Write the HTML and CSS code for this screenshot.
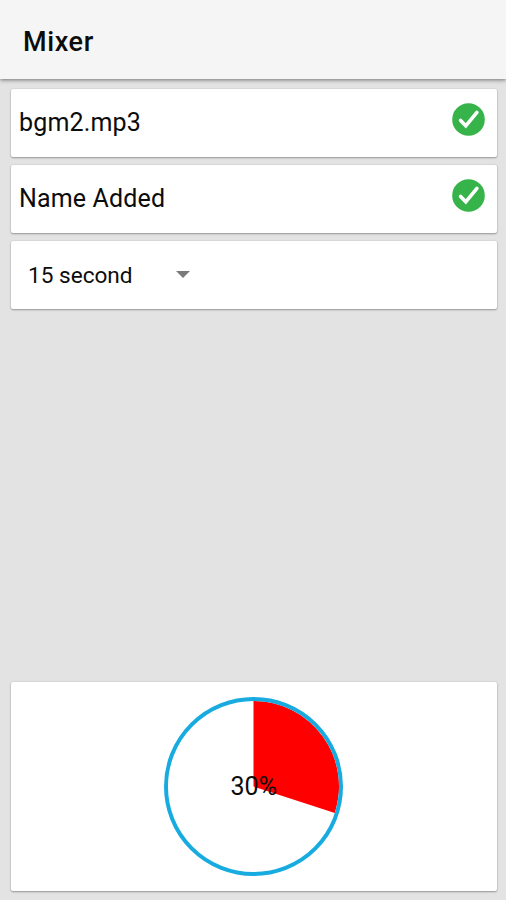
FILE: index.html
```html
<!DOCTYPE html>
<html lang="en">
<head>
<meta charset="utf-8">
<title>Mixer</title>
<link rel="stylesheet" href="styles.css">
</head>
<body>
<header class="app-bar"><h1 class="title">Mixer</h1></header>
<main class="content">
  <section class="card row">
    <span class="label">bgm2.mp3</span>
    <svg class="check" viewBox="0 0 33 33"><circle cx="16.5" cy="16.5" r="16.3" fill="#36b44a"/><path d="M8.6 17.4l5.2 5.4L24.9 9.4" fill="none" stroke="#fff" stroke-width="3.6" stroke-linecap="round"/></svg>
  </section>
  <section class="card row">
    <span class="label">Name Added</span>
    <svg class="check" viewBox="0 0 33 33"><circle cx="16.5" cy="16.5" r="16.3" fill="#36b44a"/><path d="M8.6 17.4l5.2 5.4L24.9 9.4" fill="none" stroke="#fff" stroke-width="3.6" stroke-linecap="round"/></svg>
  </section>
  <section class="card row spinner">
    <span class="value">15 second</span>
    <svg class="arrow" viewBox="0 0 14 7"><path d="M0 0h14L7 7z" fill="#7b7b7b"/></svg>
  </section>
  <section class="card progress">
    <svg class="pie" viewBox="0 0 180 180"><path d="M90 90V4A86 86 0 0 1 171.8 116.6Z" fill="#f00"/><circle cx="90" cy="90" r="88" fill="none" stroke="#18abe0" stroke-width="4"/></svg>
    <span class="percent">30%</span>
  </section>
</main>
</body>
</html>
```
FILE: styles.css
```css
* { box-sizing: border-box; }
body { margin: 0; height: 900px; display: flex; flex-direction: column; background: #e3e3e3; color: #0c0c0c; font-family: Roboto, sans-serif; overflow: hidden; }
.app-bar { height: 79px; flex: none; display: flex; align-items: center; padding: 4px 23px 0; background: #f5f5f5; box-shadow: 0 1px 4px rgba(0,0,0,.5); }
.title { margin: 0; font-size: 27px; font-weight: 500; letter-spacing: .6px; }
.content { flex: 1; display: flex; flex-direction: column; gap: 8px; padding: 9.6px 9px 9.5px 10.5px; }
.card { background: #fff; border-radius: 2px; box-shadow: 0 1px 2px rgba(0,0,0,.32), 0 0 2px rgba(0,0,0,.12); }
.row { height: 68px; display: flex; align-items: center; padding: 0 12px 0 8.5px; }
.label { flex: 1; margin-top: -1px; font-size: 25px; letter-spacing: .15px; }
.check { width: 33px; height: 33px; margin-top: -6px; }
.spinner { padding-left: 17.5px; }
.value { width: 148px; font-size: 22.6px; padding-top: 1.5px; }
.arrow { width: 14px; height: 7px; }
.progress { margin-top: auto; height: 208.4px; display: grid; place-items: center; }
.pie, .percent { grid-area: 1 / 1; }
.pie { width: 179px; height: 179px; }
.percent { font-size: 25px; padding-top: 1px; }
```
